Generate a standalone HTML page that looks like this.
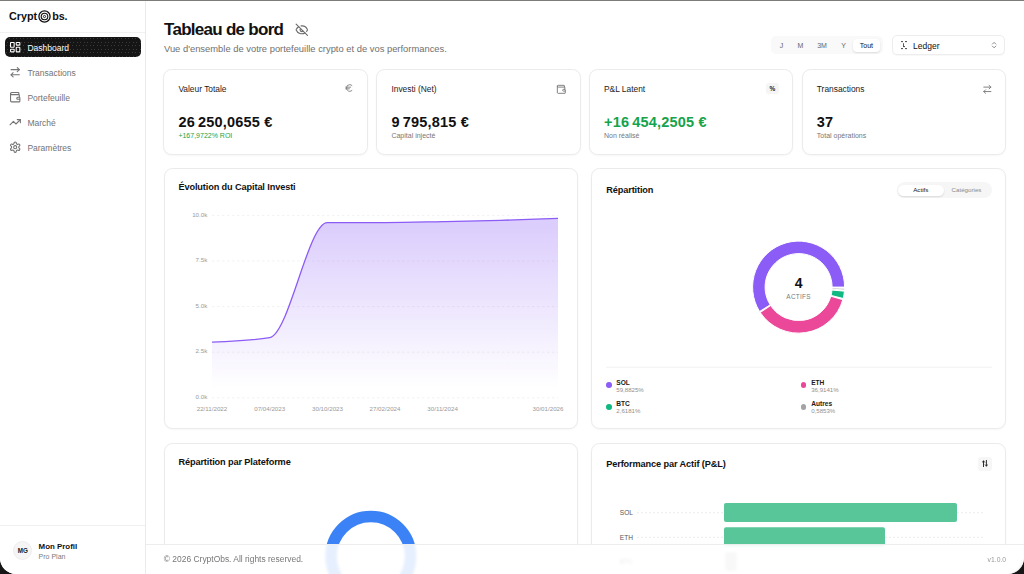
<!DOCTYPE html>
<html><head><meta charset="utf-8">
<style>
*{box-sizing:border-box;margin:0;padding:0}
html,body{width:1024px;height:574px;overflow:hidden;background:#161616}
body{font-family:"Liberation Sans",sans-serif;color:#111;position:relative}
.win{position:absolute;left:0;top:0;width:1024px;height:574px;background:#fff;border-radius:0 0 16px 16px;overflow:hidden}
.topline{position:absolute;left:0;top:0;width:1024px;height:1px;background:#7b7d79}
.abs{position:absolute;white-space:nowrap;line-height:1}
.ic{position:absolute;fill:none;stroke:currentColor;stroke-width:2;stroke-linecap:round;stroke-linejoin:round}
/* sidebar */
.side{position:absolute;left:0;top:0;width:146px;height:574px;border-right:1px solid #ebebeb;background:#fff}
.logo{position:absolute;left:0;top:0;width:145px;height:33px;border-bottom:1px solid #f1f1f1}
.nav{position:absolute;left:5px;width:135.5px;height:20px;border-radius:5px;font-size:8.5px;color:#737373}
.nav.active{background:#151515;color:#fff;background-image:radial-gradient(circle at 1.5px 1.5px,rgba(255,255,255,.16) 0.5px,transparent 0.9px),radial-gradient(circle at 4.5px 1.5px,rgba(255,255,255,.16) 0.5px,transparent 0.9px),radial-gradient(circle at 2.5px 5.5px,rgba(255,255,255,.16) 0.5px,transparent 0.9px),radial-gradient(circle at 5.5px 5.5px,rgba(255,255,255,.16) 0.5px,transparent 0.9px);background-size:7px 7px}
.nav .ic{left:3.9px;top:4.3px;width:12.4px;height:12.4px;stroke-width:2.1}
.nav span{position:absolute;left:22.4px;top:6.5px;line-height:1}
.prof{position:absolute;left:0;top:525px;width:145px;height:49px;border-top:1px solid #f0f0f0}
/* main */
.card{position:absolute;background:#fff;border:1px solid #ebebeb;border-radius:8.5px;box-shadow:0 1px 2px rgba(0,0,0,.035)}
.lbl{font-size:8.4px;color:#1a1a1a}
.val{font-size:14.5px;font-weight:700;color:#111;letter-spacing:0.2px}
.sub{font-size:7px;color:#777}
.sic{width:10.67px;height:10.67px;color:#737373}
.ttl{font-size:9.2px;font-weight:700;color:#111;letter-spacing:-0.12px}
.ax{font-size:6.2px;color:#9a9a9a}
.leg{font-size:6.6px;font-weight:700;color:#1a1a1a}
.legs{font-size:6.1px;color:#8f8f8f}
.dot{position:absolute;width:5.8px;height:5.8px;border-radius:50%}
.footer{position:absolute;left:146px;top:544px;width:878px;height:30px;border-top:1px solid #ededed;background:rgba(255,255,255,.87);-webkit-backdrop-filter:blur(1.5px);backdrop-filter:blur(1.5px)}
</style></head><body>
<div class="win">
  <!-- SIDEBAR -->
  <div class="side">
    <div class="logo">
      <div class="abs" style="left:9px;top:10.8px;font-size:10.8px;font-weight:700;letter-spacing:0px">Crypt</div>
      <svg class="abs" style="left:37.8px;top:9.6px" width="13" height="13" viewBox="0 0 13 13"><circle cx="6.5" cy="6.5" r="5.6" fill="none" stroke="#111" stroke-width="1.3"/><circle cx="6.5" cy="6.5" r="3.3" fill="none" stroke="#111" stroke-width="1.1"/><circle cx="6.5" cy="6.5" r="1.1" fill="none" stroke="#111" stroke-width="0.9"/></svg>
      <div class="abs" style="left:52.3px;top:10.8px;font-size:10.8px;font-weight:700;letter-spacing:-0.2px">bs.</div>
    </div>
    <div class="nav active" style="top:37px">
      <svg class="ic" viewBox="0 0 24 24"><rect width="7" height="9" x="3" y="3" rx="1"/><rect width="7" height="5" x="14" y="3" rx="1"/><rect width="7" height="9" x="14" y="12" rx="1"/><rect width="7" height="5" x="3" y="16" rx="1"/></svg>
      <span>Dashboard</span></div>
    <div class="nav" style="top:62px">
      <svg class="ic" viewBox="0 0 24 24"><path d="m16 3 4 4-4 4"/><path d="M20 7H4"/><path d="m8 21-4-4 4-4"/><path d="M4 17h16"/></svg>
      <span>Transactions</span></div>
    <div class="nav" style="top:87px">
      <svg class="ic" viewBox="0 0 24 24"><path d="M19 7V4a1 1 0 0 0-1-1H5a2 2 0 0 0 0 4h14a1 1 0 0 1 1 1v4h-3a2 2 0 0 0 0 4h3a1 1 0 0 0 1-1v-2a1 1 0 0 0-1-1"/><path d="M3 5v14a2 2 0 0 0 2 2h15a1 1 0 0 0 1-1v-4"/></svg>
      <span>Portefeuille</span></div>
    <div class="nav" style="top:112px">
      <svg class="ic" viewBox="0 0 24 24"><polyline points="22 7 13.5 15.5 8.5 10.5 2 17"/><polyline points="16 7 22 7 22 13"/></svg>
      <span>Marché</span></div>
    <div class="nav" style="top:137px">
      <svg class="ic" viewBox="0 0 24 24"><path d="M12.22 2h-.44a2 2 0 0 0-2 2v.18a2 2 0 0 1-1 1.73l-.43.25a2 2 0 0 1-2 0l-.15-.08a2 2 0 0 0-2.73.73l-.22.38a2 2 0 0 0 .73 2.73l.15.1a2 2 0 0 1 1 1.72v.51a2 2 0 0 1-1 1.74l-.15.09a2 2 0 0 0-.73 2.73l.22.38a2 2 0 0 0 2.73.73l.15-.08a2 2 0 0 1 2 0l.43.25a2 2 0 0 1 1 1.73V20a2 2 0 0 0 2 2h.44a2 2 0 0 0 2-2v-.18a2 2 0 0 1 1-1.73l.43-.25a2 2 0 0 1 2 0l.15.08a2 2 0 0 0 2.730-.73l.22-.39a2 2 0 0 0-.73-2.73l-.15-.08a2 2 0 0 1-1-1.74v-.5a2 2 0 0 1 1-1.74l.15-.09a2 2 0 0 0 .73-2.73l-.22-.38a2 2 0 0 0-2.73-.73l-.15.08a2 2 0 0 1-2 0l-.43-.25a2 2 0 0 1-1-1.73V4a2 2 0 0 0-2-2z"/><circle cx="12" cy="12" r="3"/></svg>
      <span>Paramètres</span></div>
    <div class="prof">
      <div class="abs" style="left:13.3px;top:14.6px;width:19px;height:19px;border-radius:50%;background:#f5f5f5;border:1px solid #ececec;font-size:6.3px;font-weight:700;text-align:center;line-height:17px;color:#222">MG</div>
      <div class="abs" style="left:38.6px;top:16.8px;font-size:7.9px;font-weight:700;color:#111">Mon Profil</div>
      <div class="abs" style="left:38.6px;top:26.9px;font-size:7px;color:#7a7a7a">Pro Plan</div>
    </div>
  </div>

  <!-- HEADER -->
  <div class="abs" style="left:164px;top:20px;font-size:17px;font-weight:700;letter-spacing:-0.72px;line-height:normal">Tableau de bord</div>
  <svg class="ic" style="left:295px;top:22.5px;width:13.6px;height:13.6px;color:#6b6b6b;stroke-width:2" viewBox="0 0 24 24" preserveAspectRatio="none"><path d="M10.733 5.076a10.744 10.744 0 0 1 11.205 6.575 1 1 0 0 1 0 .696 10.747 10.747 0 0 1-1.444 2.49"/><path d="M14.084 14.158a3 3 0 0 1-4.242-4.242"/><path d="M17.479 17.499a10.75 10.75 0 0 1-15.417-5.151 1 1 0 0 1 0-.696 10.75 10.75 0 0 1 4.446-5.143"/><path d="m2 2 20 20"/></svg>
  <div class="abs" style="left:164px;top:43px;font-size:9.4px;color:#707070;line-height:normal">Vue d'ensemble de votre portefeuille crypto et de vos performances.</div>

  <!-- period selector -->
  <div class="abs" style="left:771px;top:35.7px;width:111.5px;height:18.2px;border-radius:5px;background:#f9f9f9"></div>
  <div class="abs" style="left:852.6px;top:38.6px;width:27.7px;height:13px;border-radius:4px;background:#fff;box-shadow:0 1px 2px rgba(0,0,0,.12)"></div>
  <div class="abs" style="left:771px;top:41.5px;width:21px;text-align:center;font-size:7px;color:#666">J</div>
  <div class="abs" style="left:790px;top:41.5px;width:21px;text-align:center;font-size:7px;color:#666">M</div>
  <div class="abs" style="left:811.5px;top:41.5px;width:21px;text-align:center;font-size:7px;color:#666">3M</div>
  <div class="abs" style="left:833px;top:41.5px;width:21px;text-align:center;font-size:7px;color:#666">Y</div>
  <div class="abs" style="left:852.6px;top:41.5px;width:27.7px;text-align:center;font-size:7px;color:#111">Tout</div>

  <!-- ledger select -->
  <div class="abs" style="left:892.4px;top:34.6px;width:113px;height:20.4px;border-radius:5px;border:1px solid #ededed;background:#fff;box-shadow:0 1px 1px rgba(0,0,0,.03)"></div>
  <svg class="abs" style="left:900px;top:40px" width="9" height="10" viewBox="0 0 9 10"><g fill="#333"><rect x="1" y="1.2" width="2" height="0.9"/><rect x="5" y="1.2" width="2" height="0.9"/><rect x="1" y="8.2" width="2" height="0.9"/><rect x="5" y="8.2" width="2" height="0.9"/><rect x="3.2" y="3.2" width="0.8" height="3.6"/><rect x="3.2" y="6.2" width="1.8" height="0.9"/></g><g fill="#ddd"><rect x="0" y="3.5" width="0.6" height="0.6"/><rect x="8.4" y="3.5" width="0.6" height="0.6"/><rect x="0" y="6.5" width="0.6" height="0.6"/><rect x="8.4" y="6.5" width="0.6" height="0.6"/></g></svg>
  <div class="abs" style="left:913px;top:41.9px;font-size:8.5px;color:#111">Ledger</div>
  <svg class="ic" style="left:990.2px;top:40.8px;width:8.2px;height:8.2px;color:#666;stroke-width:2.2" viewBox="0 0 24 24"><path d="m7 15 5 5 5-5"/><path d="m7 9 5-5 5 5"/></svg>

  <!-- STAT CARDS -->
  <div class="card" style="left:163px;top:69px;width:205px;height:85.5px"></div>
  <div class="card" style="left:376px;top:69px;width:205px;height:85.5px"></div>
  <div class="card" style="left:589px;top:69px;width:204px;height:85.5px"></div>
  <div class="card" style="left:802px;top:69px;width:204px;height:85.5px"></div>

  <div class="abs lbl" style="left:178.4px;top:85px">Valeur Totale</div>
  <svg class="ic sic" style="left:343.6px;top:83.4px;width:10px;height:10px" viewBox="0 0 24 24"><path d="M4 10h12"/><path d="M4 14h9"/><path d="M19 6a7.7 7.7 0 0 0-5.2-2A7.9 7.9 0 0 0 6 12c0 4.4 3.5 8 7.8 8 2 0 3.8-.8 5.2-2"/></svg>
  <div class="abs val" style="left:178.4px;top:114.5px">26&#8201;250,0655 €</div>
  <div class="abs sub" style="left:178.4px;top:132px;color:#16a34a">+167,9722% ROI</div>

  <div class="abs lbl" style="left:391.4px;top:85px">Investi (Net)</div>
  <svg class="ic sic" style="left:555.6px;top:83.5px" viewBox="0 0 24 24"><path d="M19 7V4a1 1 0 0 0-1-1H5a2 2 0 0 0 0 4h14a1 1 0 0 1 1 1v4h-3a2 2 0 0 0 0 4h3a1 1 0 0 0 1-1v-2a1 1 0 0 0-1-1"/><path d="M3 5v14a2 2 0 0 0 2 2h15a1 1 0 0 0 1-1v-4"/></svg>
  <div class="abs val" style="left:391.4px;top:114.5px">9&#8201;795,815 €</div>
  <div class="abs sub" style="left:391.4px;top:132px">Capital injecté</div>

  <div class="abs lbl" style="left:604px;top:85px">P&amp;L Latent</div>
  <div class="abs" style="left:766px;top:82.9px;width:13px;height:10.8px;border-radius:3px;background:#f5f5f5;font-size:6.5px;font-weight:700;text-align:center;line-height:12.6px;color:#222">%</div>
  <div class="abs val" style="left:604px;top:114.5px;color:#16a34a">+16&#8201;454,2505 €</div>
  <div class="abs sub" style="left:604px;top:132px">Non réalisé</div>

  <div class="abs lbl" style="left:816.8px;top:85px">Transactions</div>
  <svg class="ic sic" style="left:981.7px;top:83.7px" viewBox="0 0 24 24"><path d="m16 3 4 4-4 4"/><path d="M20 7H4"/><path d="m8 21-4-4 4-4"/><path d="M4 17h16"/></svg>
  <div class="abs val" style="left:816.8px;top:114.5px">37</div>
  <div class="abs sub" style="left:816.8px;top:132px">Total opérations</div>

  <!-- CHART CARDS -->
  <div class="card" style="left:164px;top:168px;width:414px;height:261px"></div>
  <div class="card" style="left:591px;top:168px;width:415px;height:261px"></div>
  <div class="card" style="left:164px;top:442.5px;width:414px;height:200px"></div>
  <div class="card" style="left:591px;top:442.5px;width:415px;height:200px"></div>

  <div class="abs ttl" style="left:178.4px;top:183.1px">Évolution du Capital Investi</div>
  <div class="abs ttl" style="left:606.2px;top:186.1px">Répartition</div>
  <div class="abs ttl" style="left:178.4px;top:457.7px">Répartition par Plateforme</div>
  <div class="abs ttl" style="left:606.2px;top:459.7px">Performance par Actif (P&amp;L)</div>

  <svg class="abs" style="left:0;top:0" width="1024" height="574" viewBox="0 0 1024 574">
    <defs><linearGradient id="g1" x1="0" y1="0" x2="0" y2="1"><stop offset="5%" stop-color="#8b5cf6" stop-opacity="0.3"/><stop offset="95%" stop-color="#8b5cf6" stop-opacity="0"/></linearGradient></defs>
    <g stroke="#ececec" stroke-width="0.7" stroke-dasharray="2.5 2.5">
      <line x1="212" y1="215.4" x2="558" y2="215.4"/><line x1="212" y1="261" x2="558" y2="261"/><line x1="212" y1="306.6" x2="558" y2="306.6"/><line x1="212" y1="352.2" x2="558" y2="352.2"/><line x1="212" y1="397.8" x2="558" y2="397.8"/>
    </g>
    <path d="M212.00,342.20C231.23,341.43 250.47,340.67 269.70,337.60C288.90,334.54 308.10,222.77 327.30,222.70C346.53,222.63 365.77,222.67 385.00,222.60C404.23,222.53 423.47,221.98 442.70,221.60C461.90,221.22 481.10,220.85 500.30,220.30C519.53,219.75 538.77,219.02 558.00,218.30L558,398L212,398Z" fill="url(#g1)"/>
    <path d="M212.00,342.20C231.23,341.43 250.47,340.67 269.70,337.60C288.90,334.54 308.10,222.77 327.30,222.70C346.53,222.63 365.77,222.67 385.00,222.60C404.23,222.53 423.47,221.98 442.70,221.60C461.90,221.22 481.10,220.85 500.30,220.30C519.53,219.75 538.77,219.02 558.00,218.30" fill="none" stroke="#8b5cf6" stroke-width="1.3"/>
    <path d="M844.60,287.10A46,46 0 1 0 759.58,311.47L770.19,304.84A33.5,33.5 0 1 1 832.10,287.10Z" fill="#8b5cf6" stroke="#fff" stroke-width="1"/><path d="M760.23,312.48A46,46 0 0 0 842.85,299.66L830.83,296.24A33.5,33.5 0 0 1 770.66,305.58Z" fill="#ec4899" stroke="#fff" stroke-width="1"/><path d="M843.17,298.49A46,46 0 0 0 844.42,291.17L831.97,290.06A33.5,33.5 0 0 1 831.06,295.40Z" fill="#10b981" stroke="#fff" stroke-width="1"/><path d="M844.51,289.97A46,46 0 0 0 844.58,288.30L832.09,287.98A33.5,33.5 0 0 1 832.03,289.19Z" fill="#a3a3a3" stroke="#fff" stroke-width="1"/>
    <line x1="606" y1="367.2" x2="992" y2="367.2" stroke="#eeeeee" stroke-width="0.8"/>
    <circle cx="370.8" cy="556.2" r="39.75" fill="none" stroke="#3b82f6" stroke-width="11.5"/>
    <g stroke="#e2e2e2" stroke-width="0.7" stroke-dasharray="2 2">
      <line x1="637" y1="512.7" x2="984" y2="512.7"/><line x1="637" y1="537.3" x2="984" y2="537.3"/>
    </g>
    <rect x="724" y="503" width="233" height="19" rx="2" fill="#59c69a"/>
    <rect x="724" y="527.3" width="161" height="19" rx="2" fill="#59c69a"/>
    <rect x="725" y="552" width="12" height="19" rx="2" fill="#c8c8d0"/>
  </svg>

  <!-- y axis -->
  <div class="abs ax" style="left:180px;width:27.3px;text-align:right;top:211.6px">10.0k</div>
  <div class="abs ax" style="left:180px;width:27.3px;text-align:right;top:257.2px">7.5k</div>
  <div class="abs ax" style="left:180px;width:27.3px;text-align:right;top:302.8px">5.0k</div>
  <div class="abs ax" style="left:180px;width:27.3px;text-align:right;top:348.4px">2.5k</div>
  <div class="abs ax" style="left:180px;width:27.3px;text-align:right;top:394px">0.0k</div>
  <!-- x axis -->
  <div class="abs ax" style="left:182px;width:60px;text-align:center;top:405.9px">22/11/2022</div>
  <div class="abs ax" style="left:239.7px;width:60px;text-align:center;top:405.9px">07/04/2023</div>
  <div class="abs ax" style="left:297.5px;width:60px;text-align:center;top:405.9px">30/10/2023</div>
  <div class="abs ax" style="left:355px;width:60px;text-align:center;top:405.9px">27/02/2024</div>
  <div class="abs ax" style="left:412.6px;width:60px;text-align:center;top:405.9px">30/11/2024</div>
  <div class="abs ax" style="left:518px;width:60px;text-align:center;top:405.9px">30/01/2026</div>

  <!-- toggle -->
  <div class="abs" style="left:897px;top:181.8px;width:94.5px;height:15.8px;border-radius:8px;background:#f6f6f6"></div>
  <div class="abs" style="left:897.8px;top:184.5px;width:46px;height:11.8px;border-radius:6px;background:#fff;box-shadow:0 1px 2px rgba(0,0,0,.12)"></div>
  <div class="abs" style="left:897.8px;top:187.3px;width:46px;text-align:center;font-size:6.2px;color:#111">Actifs</div>
  <div class="abs" style="left:944px;top:187.3px;width:45px;text-align:center;font-size:6.2px;color:#8a8a8a">Catégories</div>

  <!-- donut center -->
  <div class="abs" style="left:778.6px;width:40px;text-align:center;top:275.6px;font-size:14px;font-weight:700;color:#111">4</div>
  <div class="abs" style="left:778.6px;width:40px;text-align:center;top:294px;font-size:6.4px;color:#7a7a7a;letter-spacing:0.3px">ACTIFS</div>

  <!-- legend -->
  <div class="dot" style="left:605.9px;top:382.2px;background:#8b5cf6"></div>
  <div class="abs leg" style="left:616.3px;top:379.6px">SOL</div>
  <div class="abs legs" style="left:616.3px;top:387.2px">59,8825%</div>
  <div class="dot" style="left:605.9px;top:403.8px;background:#10b981"></div>
  <div class="abs leg" style="left:616.3px;top:400.9px">BTC</div>
  <div class="abs legs" style="left:616.3px;top:408.2px">2,6181%</div>
  <div class="dot" style="left:800.7px;top:382.2px;background:#ec4899"></div>
  <div class="abs leg" style="left:811.2px;top:379.6px">ETH</div>
  <div class="abs legs" style="left:811.2px;top:387.2px">36,9141%</div>
  <div class="dot" style="left:800.7px;top:403.8px;background:#a3a3a3"></div>
  <div class="abs leg" style="left:811.2px;top:400.9px">Autres</div>
  <div class="abs legs" style="left:811.2px;top:408.2px">0,5853%</div>

  <!-- perf chart -->
  <div class="abs" style="left:978px;top:457px;width:13.7px;height:13.7px;border-radius:3px;background:#f6f6f6"></div>
  <svg class="abs" style="left:982px;top:460.4px" width="6" height="7" viewBox="0 0 6 7"><g fill="none" stroke="#222" stroke-width="0.95" stroke-linecap="round" stroke-linejoin="round"><path d="M1.5 1v5.6M0.4 2.2 1.5 0.9 2.6 2.2"/><path d="M4.4 0.4v5.6M3.3 4.8 4.4 6.1 5.5 4.8"/></g></svg>
  <div class="abs" style="left:603px;width:30px;text-align:right;top:509.5px;font-size:6.6px;color:#555">SOL</div>
  <div class="abs" style="left:603px;width:30px;text-align:right;top:534.8px;font-size:6.6px;color:#555">ETH</div>
  <div class="abs" style="left:603px;width:30px;text-align:right;top:559.3px;font-size:6.6px;color:#555">BTC</div>

  <div class="footer">
    <div class="abs" style="left:17.8px;top:10.2px;font-size:8.45px;color:#777">© 2026 CryptObs. All rights reserved.</div>
    <div class="abs" style="left:841.6px;top:12.3px;font-size:6.8px;color:#999">v1.0.0</div>
  </div>
  <div class="topline"></div>
</div>
</body></html>
